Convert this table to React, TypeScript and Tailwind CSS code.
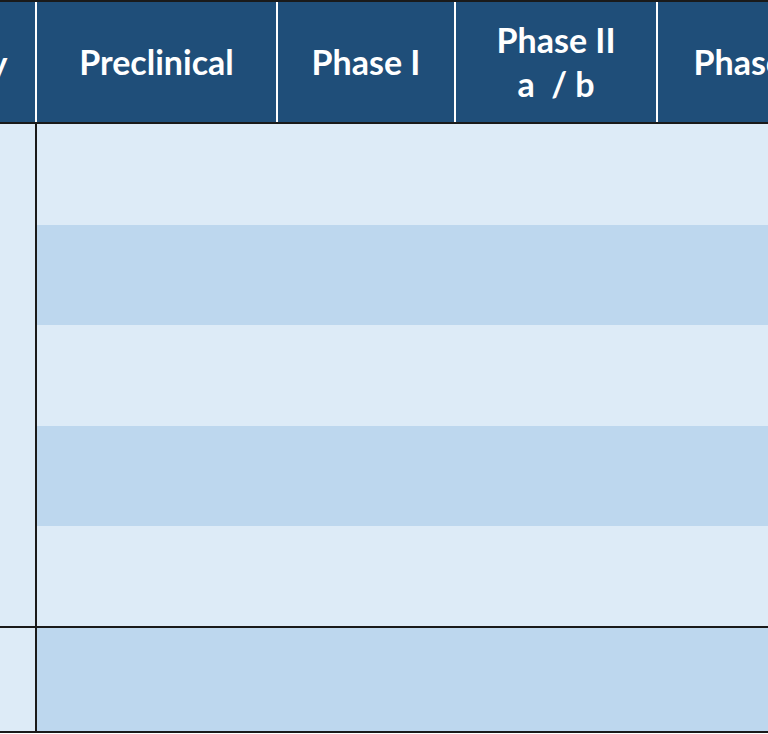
import React from "react";

const headerCols = [
  { label: "Preclinical", width: "w-[241px]" },
  { label: "Phase I", width: "w-[178px]" },
  { label: "Phase II\na  / b", width: "w-[202px]" },
  { label: "Phase III", width: "w-[202px]" },
];

const stripes = [
  "h-[101px] bg-[#DDEBF7]",
  "h-[100px] bg-[#BDD7EE]",
  "h-[101px] bg-[#DDEBF7]",
  "h-[100px] bg-[#BDD7EE]",
  "h-[100px] bg-[#DDEBF7]",
];

export default function App() {
  return (
    <div className="w-[768px] h-[734px] overflow-hidden bg-white font-['Lato','Liberation_Sans',sans-serif]">
      <div className="ml-[-144px] w-[1100px]">
        {/* header */}
        <div className="flex h-[124px] bg-[#1F4E79] border-t-2 border-b-2 border-[#1a1a1a] text-white font-bold text-[34px]">
          <div className="w-[179px] shrink-0 flex items-center justify-center">Therapy</div>
          {headerCols.map((c) => (
            <div
              key={c.label}
              className={`${c.width} shrink-0 border-l-2 border-white flex items-center justify-center text-center whitespace-pre leading-[44px]`}
            >
              {c.label}
            </div>
          ))}
        </div>

        {/* body: merged first column group */}
        <div className="flex">
          <div className="w-[181px] shrink-0 bg-[#DDEBF7] border-r-2 border-[#1a1a1a]" />
          <div className="flex-1 flex flex-col">
            {stripes.map((s, i) => (
              <div key={i} className={s} />
            ))}
          </div>
        </div>

        {/* last row */}
        <div className="flex h-[107px] border-t-2 border-b-2 border-[#1a1a1a]">
          <div className="w-[181px] shrink-0 bg-[#DDEBF7] border-r-2 border-[#1a1a1a]" />
          <div className="flex-1 bg-[#BDD7EE]" />
        </div>
      </div>
    </div>
  );
}
